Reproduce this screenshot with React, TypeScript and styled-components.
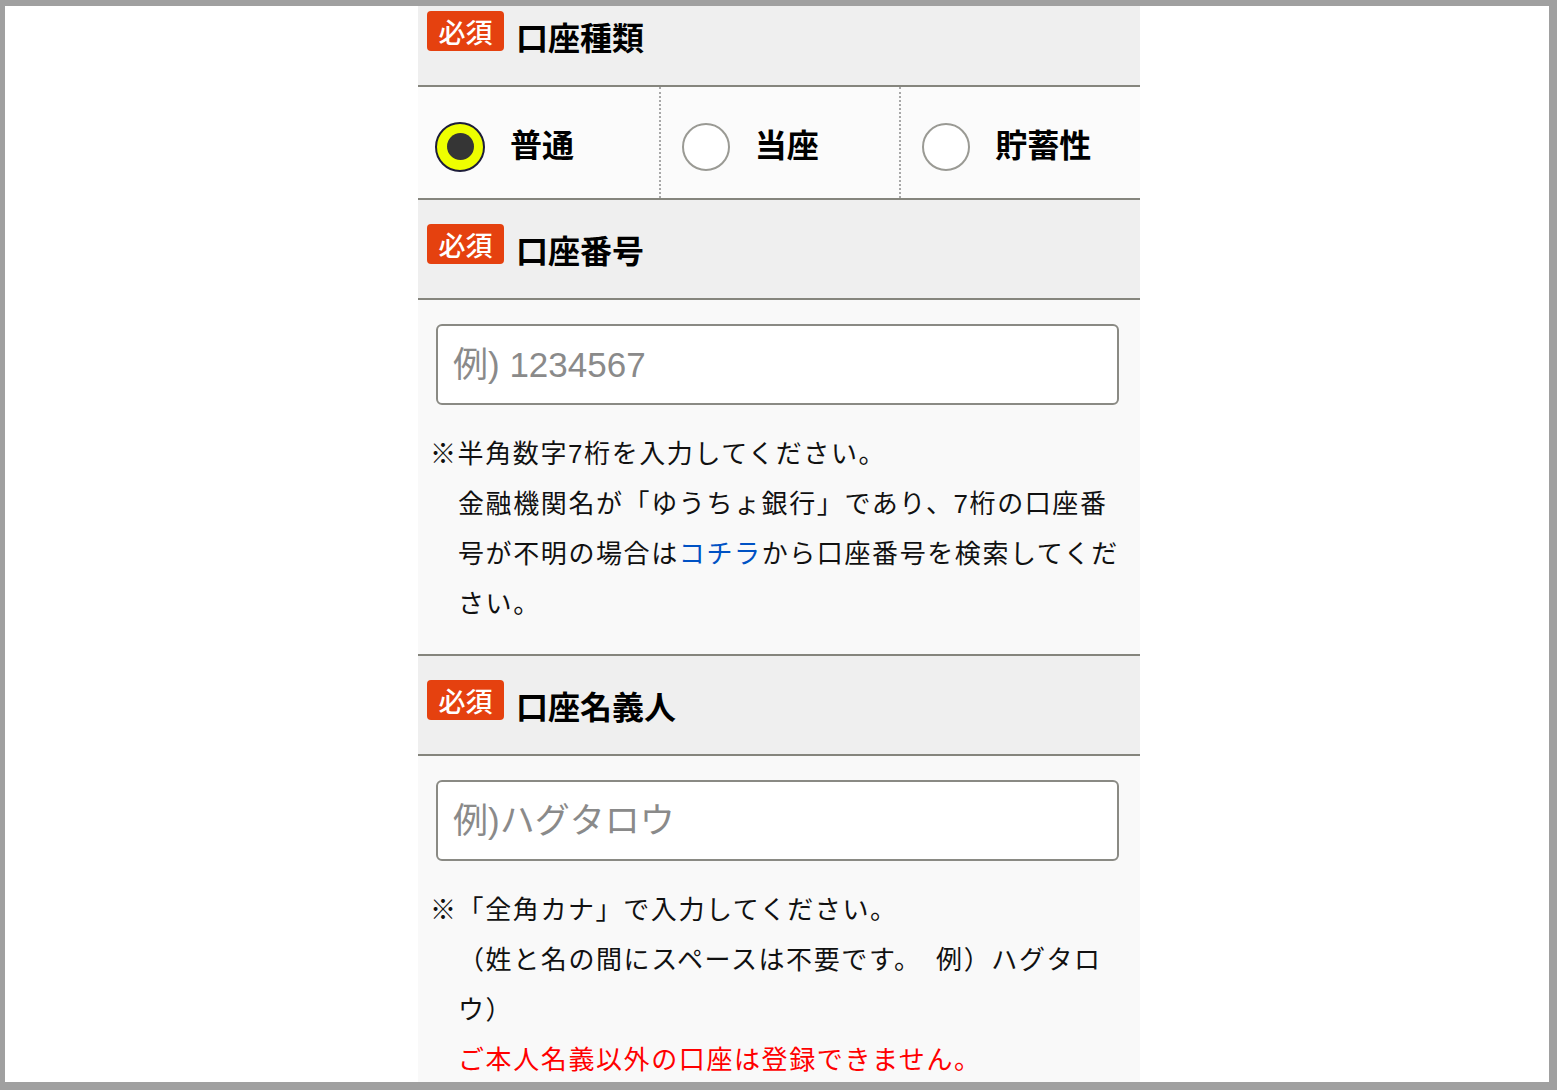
import React from "react";
import styled, { createGlobalStyle } from "styled-components";

const GlobalStyle = createGlobalStyle`
  html, body { margin: 0; padding: 0; }
  body { background: #a0a0a0; font-family: "Noto Sans CJK JP", sans-serif; }
  *, *::before, *::after { box-sizing: border-box; }
`;

const Frame = styled.div`
  height: 1090px;
  padding: 6px 8px 8px 5px;
  background: #a0a0a0;
`;

const Viewport = styled.div`
  height: 100%;
  background: #ffffff;
  overflow: hidden;
`;

const Column = styled.main`
  width: 722px;
  margin: -19px 0 0 413px;
  background: #f9f9f9;
  font-family: "Liberation Sans", "Noto Sans CJK JP", sans-serif;
  color: #111;
`;

const SectionHeader = styled.div`
  display: flex;
  align-items: flex-start;
  gap: 12px;
  height: 100px;
  padding: 24px 9px 0;
  background: #efefef;
  border-bottom: 2px solid #85857d;
`;

const Badge = styled.span`
  flex: none;
  display: inline-flex;
  align-items: center;
  justify-content: center;
  width: 77px;
  height: 40px;
  border-radius: 4px;
  background: #e5410f;
  color: #ffffff;
  font-family: "Noto Sans CJK JP", sans-serif;
  font-size: 27px;
  font-weight: 500;
  line-height: 1;
`;

const Title = styled.h2`
  margin: 9px 0 0;
  font-family: "Noto Sans CJK JP", sans-serif;
  font-size: 32px;
  font-weight: 700;
  line-height: 1;
  color: #000;
`;

const Options = styled.div`
  display: grid;
  grid-template-columns: repeat(3, 1fr);
  height: 113px;
  background: #fbfbfb;
  border-bottom: 2px solid #85857d;
`;

const Option = styled.label`
  display: flex;
  align-items: center;
  gap: 25px;
  padding: 3px 0 3px 17px;
  cursor: pointer;
  & + & {
    border-left: 2px dotted #a8a8a8;
  }
`;

const RadioMark = styled.span<{ $checked?: boolean }>`
  flex: none;
  display: flex;
  align-items: center;
  justify-content: center;
  width: ${(p) => (p.$checked ? 50 : 48)}px;
  height: ${(p) => (p.$checked ? 50 : 48)}px;
  margin: 8px 0 0 ${(p) => (p.$checked ? 0 : 4)}px;
  border-radius: 50%;
  border: 2px solid ${(p) => (p.$checked ? "#1d1d3a" : "#9a9a94")};
  background: ${(p) => (p.$checked ? "#eeff00" : "#ffffff")};
  &::after {
    content: "";
    display: ${(p) => (p.$checked ? "block" : "none")};
    width: 27px;
    height: 27px;
    border-radius: 50%;
    background: #353535;
  }
`;

const OptionLabel = styled.span`
  font-family: "Noto Sans CJK JP", sans-serif;
  font-size: 32px;
  font-weight: 700;
  line-height: 1;
  color: #000;
`;

const Field = styled.div<{ $last?: boolean }>`
  padding: 24px 0 25px;
  background: #f9f9f9;
  border-bottom: ${(p) => (p.$last ? "none" : "2px solid #85857d")};
`;

const TextInput = styled.input`
  display: block;
  width: 683px;
  height: 81px;
  margin: 0 0 0 18px;
  padding: 0 15px;
  border: 2px solid #8a8a84;
  border-radius: 6px;
  background: #ffffff;
  font-family: "Liberation Sans", "Noto Sans CJK JP", sans-serif;
  font-size: 35px;
  color: #333;
  outline: none;
  &::placeholder {
    color: #8a8a8a;
  }
`;

const Notes = styled.div`
  margin-top: 24px;
  padding: 0 15px 0 12px;
  font-family: "Liberation Sans", "Noto Sans CJK JP", sans-serif;
  font-size: 26px;
  line-height: 50px;
  letter-spacing: 1.6px;
  color: #111;
`;

const NoteHead = styled.p`
  margin: 0;
`;

const NoteBody = styled.p`
  margin: 0;
  padding-left: 28px;
`;

const Link = styled.a`
  color: #0052c4;
  text-decoration: none;
`;

const Warning = styled.span`
  display: block;
  color: #ff0000;
`;

export default function App() {
  return (
    <>
      <GlobalStyle />
      <Frame>
        <Viewport>
          <Column>
            <SectionHeader>
              <Badge>必須</Badge>
              <Title>口座種類</Title>
            </SectionHeader>
            <Options>
              <Option>
                <RadioMark $checked />
                <OptionLabel>普通</OptionLabel>
              </Option>
              <Option>
                <RadioMark />
                <OptionLabel>当座</OptionLabel>
              </Option>
              <Option>
                <RadioMark />
                <OptionLabel>貯蓄性</OptionLabel>
              </Option>
            </Options>

            <SectionHeader>
              <Badge>必須</Badge>
              <Title>口座番号</Title>
            </SectionHeader>
            <Field>
              <TextInput placeholder="例) 1234567" />
              <Notes>
                <NoteHead>※半角数字7桁を入力してください。</NoteHead>
                <NoteBody>
                  金融機関名が「ゆうちょ銀行」であり、7桁の口座番号が不明の場合は<Link href="#">コチラ</Link>から口座番号を検索してください。
                </NoteBody>
              </Notes>
            </Field>

            <SectionHeader>
              <Badge>必須</Badge>
              <Title>口座名義人</Title>
            </SectionHeader>
            <Field $last>
              <TextInput placeholder="例)ハグタロウ" />
              <Notes>
                <NoteHead>※「全角カナ」で入力してください。</NoteHead>
                <NoteBody>
                  （姓と名の間にスペースは不要です。　例）ハグタロウ）
                  <Warning>ご本人名義以外の口座は登録できません。</Warning>
                </NoteBody>
              </Notes>
            </Field>
          </Column>
        </Viewport>
      </Frame>
    </>
  );
}
